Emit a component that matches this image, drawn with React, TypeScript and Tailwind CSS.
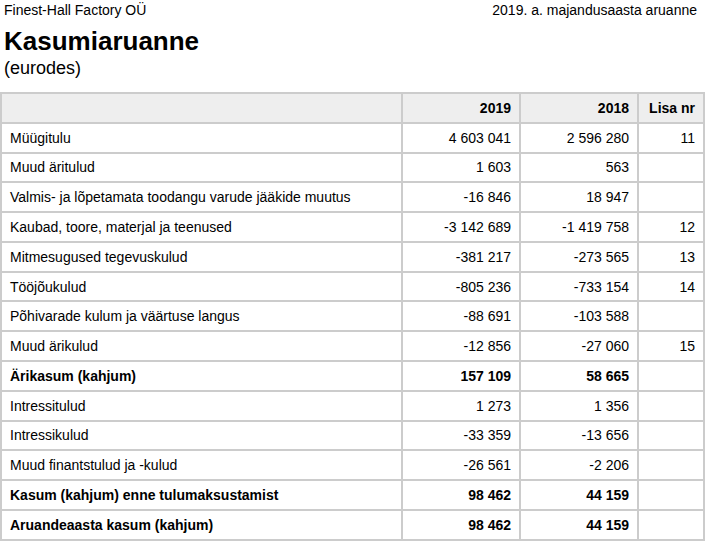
const rows: { label: string; y2019: string; y2018: string; note?: string; bold?: boolean }[] = [
  { label: 'Müügitulu', y2019: '4 603 041', y2018: '2 596 280', note: '11' },
  { label: 'Muud äritulud', y2019: '1 603', y2018: '563' },
  { label: 'Valmis- ja lõpetamata toodangu varude jääkide muutus', y2019: '-16 846', y2018: '18 947' },
  { label: 'Kaubad, toore, materjal ja teenused', y2019: '-3 142 689', y2018: '-1 419 758', note: '12' },
  { label: 'Mitmesugused tegevuskulud', y2019: '-381 217', y2018: '-273 565', note: '13' },
  { label: 'Tööjõukulud', y2019: '-805 236', y2018: '-733 154', note: '14' },
  { label: 'Põhivarade kulum ja väärtuse langus', y2019: '-88 691', y2018: '-103 588' },
  { label: 'Muud ärikulud', y2019: '-12 856', y2018: '-27 060', note: '15' },
  { label: 'Ärikasum (kahjum)', y2019: '157 109', y2018: '58 665', bold: true },
  { label: 'Intressitulud', y2019: '1 273', y2018: '1 356' },
  { label: 'Intressikulud', y2019: '-33 359', y2018: '-13 656' },
  { label: 'Muud finantstulud ja -kulud', y2019: '-26 561', y2018: '-2 206' },
  { label: 'Kasum (kahjum) enne tulumaksustamist', y2019: '98 462', y2018: '44 159', bold: true },
  { label: 'Aruandeaasta kasum (kahjum)', y2019: '98 462', y2018: '44 159', bold: true },
]

const cell = 'border-2 border-[#cccccc] py-[5.9px] leading-4'

export default function App() {
  return (
    <div className="min-h-[543px] bg-white text-black font-['Liberation_Sans',Arial,sans-serif]">
      <div className="flex justify-between pl-[4px] pr-[12px] pt-[2px] text-[14px] leading-4">
        <span>Finest-Hall Factory OÜ</span>
        <span>2019. a. majandusaasta aruanne</span>
      </div>
      <h1 className="mt-[8px] pl-[4px] text-[26px] font-bold leading-[30px]">Kasumiaruanne</h1>
      <p className="mt-[2px] pl-[4px] text-[18px] leading-[21px]">(eurodes)</p>

      <table className="mt-[13px] w-[703px] table-fixed border-collapse text-[14px]">
        <colgroup>
          <col className="w-[401px]" />
          <col className="w-[118px]" />
          <col className="w-[118px]" />
          <col className="w-[66px]" />
        </colgroup>
        <thead>
          <tr className="bg-[#eeeeee] font-bold">
            <th className={`${cell} px-2`}></th>
            <th className={`${cell} px-2 text-right`}>2019</th>
            <th className={`${cell} px-2 text-right`}>2018</th>
            <th className={`${cell} px-2 text-right`}>Lisa nr</th>
          </tr>
        </thead>
        <tbody>
          {rows.map((r) => (
            <tr key={r.label} className={r.bold ? 'font-bold' : ''}>
              <td className={`${cell} px-2 text-left`}>{r.label}</td>
              <td className={`${cell} px-2 text-right`}>{r.y2019}</td>
              <td className={`${cell} px-2 text-right`}>{r.y2018}</td>
              <td className={`${cell} px-2 text-right`}>{r.note ?? ''}</td>
            </tr>
          ))}
        </tbody>
      </table>
    </div>
  )
}
